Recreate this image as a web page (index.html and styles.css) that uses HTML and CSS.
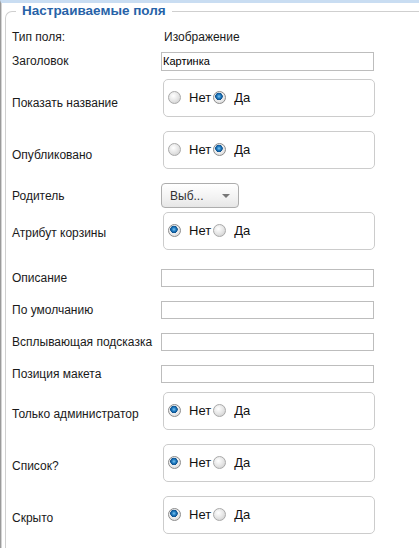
FILE: index.html
```html
<!DOCTYPE html>
<html lang="ru">
<head>
<meta charset="utf-8">
<link rel="stylesheet" href="styles.css">
</head>
<body>
<div class="page">
  <fieldset class="panel">
    <legend class="legend">Настраиваемые поля</legend>

    <div class="row r-type">
      <div class="label">Тип поля:</div>
      <div class="value">Изображение</div>
    </div>

    <div class="row r-input r-first">
      <div class="label">Заголовок</div>
      <div class="input">Картинка</div>
    </div>

    <div class="row r-box r-after-input">
      <div class="label lb-17">Показать название</div>
      <div class="box">
        <span class="radio"></span><span class="opt">Нет</span>
        <span class="radio on"></span><span class="opt">Да</span>
      </div>
    </div>

    <div class="row r-box">
      <div class="label lb-17">Опубликовано</div>
      <div class="box">
        <span class="radio"></span><span class="opt">Нет</span>
        <span class="radio on"></span><span class="opt">Да</span>
      </div>
    </div>

    <div class="row r-select">
      <div class="label lb-6">Родитель</div>
      <div class="select"><span>Выб...</span><span class="caret"></span></div>
    </div>

    <div class="row r-box r-after-select">
      <div class="label lb-14">Атрибут корзины</div>
      <div class="box">
        <span class="radio on"></span><span class="opt">Нет</span>
        <span class="radio"></span><span class="opt">Да</span>
      </div>
    </div>

    <div class="row r-input r-after-box">
      <div class="label">Описание</div>
      <div class="input"></div>
    </div>

    <div class="row r-input">
      <div class="label">По умолчанию</div>
      <div class="input"></div>
    </div>

    <div class="row r-input">
      <div class="label">Всплывающая подсказка</div>
      <div class="input"></div>
    </div>

    <div class="row r-input">
      <div class="label">Позиция макета</div>
      <div class="input"></div>
    </div>

    <div class="row r-box r-after-input2">
      <div class="label lb-15">Только администратор</div>
      <div class="box">
        <span class="radio on"></span><span class="opt">Нет</span>
        <span class="radio"></span><span class="opt">Да</span>
      </div>
    </div>

    <div class="row r-box">
      <div class="label lb-15">Список?</div>
      <div class="box">
        <span class="radio on"></span><span class="opt">Нет</span>
        <span class="radio"></span><span class="opt">Да</span>
      </div>
    </div>

    <div class="row r-box">
      <div class="label lb-15">Скрыто</div>
      <div class="box">
        <span class="radio on"></span><span class="opt">Нет</span>
        <span class="radio"></span><span class="opt">Да</span>
      </div>
    </div>
  </fieldset>
</div>
</body>
</html>
```

FILE: styles.css
```css
html, body {
  margin: 0;
  padding: 0;
  background: #fff;
  overflow: hidden;
}
body {
  font-family: "Liberation Sans", Arial, sans-serif;
  font-size: 12px;
  color: #1a1a1a;
  width: 419px;
  height: 548px;
}
.page {
  height: 548px;
  border-top: 3px solid #c9ddf2;
  border-left: 1px solid #9a9a9a;
  box-shadow: inset 1px 0 0 #d4d4d4;
  box-sizing: border-box;
  padding: 0 0 0 4px;
  overflow: hidden;
}
.panel {
  margin: 0;
  padding: 0 0 40px 6px;
  border: 1px solid #cfcfcf;
  border-right: none;
  border-bottom: none;
  border-top-left-radius: 7px;
  width: 460px;
  box-sizing: border-box;
}
.legend {
  margin-left: 4px;
  padding: 0 6px 0 6px;
  font-size: 13.5px;
  font-weight: bold;
  color: #2763a8;
  line-height: 16px;
}
.row {
  display: flex;
  align-items: flex-start;
  line-height: 14px;
}
.label {
  width: 149px;
  flex: none;
  white-space: nowrap;
}
.r-type { margin-top: 11px; }
.r-type .value { padding-left: 3px; }
.r-input { margin-top: 14px; }
.r-first { margin-top: 8px; }
.r-input .label { padding-top: 2px; }
.r-first .label { padding-top: 2px; }
.input {
  width: 213px;
  height: 18px;
  box-sizing: border-box;
  border: 1px solid #bdbdbd;
  font-size: 11px;
  line-height: 16px;
  padding-left: 1px;
  color: #000;
}
.r-first .input { height: 19px; }
.r-box { margin-top: 14px; }
.r-after-input { margin-top: 8px; }
.r-after-select { margin-top: 4px; }
.r-after-box { margin-top: 19px; }
.r-after-input2 { margin-top: 9px; }
.lb-17 { padding-top: 17px; }
.lb-15 { padding-top: 15px; }
.lb-14 { padding-top: 14px; }
.lb-6 { padding-top: 6px; }
.box {
  margin-left: 2px;
  width: 212px;
  height: 38px;
  box-sizing: border-box;
  border: 1px solid #cccccc;
  border-radius: 5px;
  display: flex;
  align-items: center;
  padding-left: 4px;
  padding-bottom: 1px;
}
.radio {
  width: 13px;
  height: 13px;
  box-sizing: border-box;
  border-radius: 50%;
  border: 1px solid #a9a9a9;
  background: radial-gradient(circle at 40% 35%, #ffffff 0%, #e6e6e6 50%, #c8c8c8 100%);
  flex: none;
}
.radio.on {
  border-color: #8c8c8c;
  background:
    radial-gradient(circle at 45% 40%, #7ec4f0 0px, #1f7bc0 2px, #0d4f8c 3.5px, rgba(0,0,0,0) 4px),
    radial-gradient(circle at 40% 35%, #ffffff 0%, #e8e8e8 60%, #cfcfcf 100%);
}
.opt {
  font-size: 13px;
  margin-left: 8px;
  margin-right: 2px;
  color: #111;
}
.r-select { margin-top: 14px; }
.select {
  margin-left: 0;
  width: 78px;
  height: 25px;
  box-sizing: border-box;
  border: 1px solid #adadad;
  border-radius: 4px;
  background: linear-gradient(#ffffff, #f2f2f2 60%, #e6e6e6);
  display: flex;
  align-items: center;
  justify-content: space-between;
  padding: 0 8px 0 8px;
  color: #333;
  font-size: 12px;
}
.caret {
  width: 0;
  height: 0;
  border-left: 4px solid transparent;
  border-right: 4px solid transparent;
  border-top: 4px solid #777;
}
```
